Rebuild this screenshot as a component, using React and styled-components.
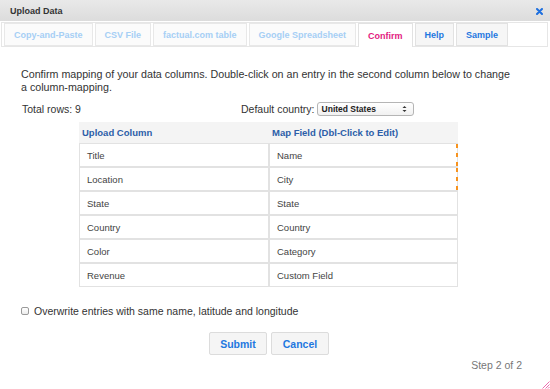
import React from 'react';
import styled, { createGlobalStyle, css } from 'styled-components';

const Global = createGlobalStyle`
  html, body { margin: 0; padding: 0; background: #fff; }
  body { font-family: "Liberation Sans", Arial, Helvetica, sans-serif; color: #333; }
  * { box-sizing: border-box; }
`;

const Dialog = styled.div`
  position: relative;
  width: 550px;
  height: 389px;
  overflow: hidden;
  background: #fff;
  display: flex;
  flex-direction: column;
`;

const TitleBar = styled.div`
  height: 21px;
  display: flex;
  align-items: center;
  justify-content: space-between;
  padding: 0 7px 0 10px;
  background: linear-gradient(#e9e9e9, #dcdcdc);
`;

const Title = styled.div`
  font-size: 9px;
  font-weight: bold;
  color: #333;
`;

const Close = styled.svg`
  width: 7px;
  height: 7px;
  margin-top: 1px;
`;

const TabBar = styled.div`
  margin: 1px 2px 0 1px;
  height: 25px;
  border: 1px solid #e6e6e6;
  padding: 0 2px;
  display: flex;
  align-items: flex-start;
  gap: 2px;
`;

const Tab = styled.div`
  height: 23px;
  padding: 0 9px;
  display: flex;
  align-items: center;
  font-size: 9px;
  font-weight: bold;
  border: 1px solid #e8e8e8;
  background: #fbfbfb;
  color: #a6cff5;
  ${(p) => p.$tone === 'link' && css`
    color: #1f78e0;
    background: #f6f6f6;
    border-color: #e2e2e2;
  `}
  ${(p) => p.$active && css`
    color: #e3197f;
    background: #fff;
    border-color: #e2e2e2;
    border-bottom: none;
    height: 24px;
  `}
`;

const Content = styled.div`
  padding: 21px 21px 0 21px;
  flex: 1;
  display: flex;
  flex-direction: column;
  font-size: 10.5px;
  color: #333;
`;

const Intro = styled.p`
  margin: 0;
  padding-right: 13px;
  font-size: 10.7px;
  line-height: 13px;
`;

const MetaRow = styled.div`
  margin-top: 7px;
  display: grid;
  grid-template-columns: 219px auto;
  align-items: center;
  height: 15px;
`;

const MetaText = styled.span`
  padding-left: ${(p) => p.$indent || 0}px;
`;

const CountryGroup = styled.div`
  display: flex;
  align-items: center;
  gap: 2px;
  padding-left: 1px;
`;

const Select = styled.div`
  width: 97px;
  height: 14px;
  border: 1px solid #b5b5b5;
  border-radius: 3px;
  background: linear-gradient(#ffffff, #f1f1f1);
  display: flex;
  align-items: center;
  justify-content: space-between;
  padding: 0 6px 0 4px;
  font-size: 8.5px;
  font-weight: bold;
  color: #222;
`;

const Arrows = styled.svg`
  width: 5px;
  height: 8px;
`;

const MappingTable = styled.table`
  margin: 6px 0 0 58px;
  width: 379px;
  border-collapse: separate;
  border-spacing: 0;
  font-size: 9.5px;
`;

const HeadCell = styled.th`
  height: 21px;
  background: #f4f4f4;
  text-align: left;
  padding: 0 0 0 ${(p) => p.$pad}px;
  color: #2c5ea8;
  font-weight: bold;
  font-size: 9.5px;
  width: ${(p) => p.$w || 'auto'};
`;

const Cell = styled.td`
  position: relative;
  height: 24px;
  border: 1px solid #e2e2e2;
  padding: 0 0 0 7px;
  color: #444;
  ${(p) => p.$edited && css`
    &::after {
      content: '';
      position: absolute;
      top: 0;
      right: -1px;
      width: 2px;
      height: 100%;
      background: repeating-linear-gradient(#f7931e 0 4px, transparent 4px 9px);
    }
  `}
`;

const CheckRow = styled.label`
  margin-top: 17px;
  display: flex;
  align-items: center;
  gap: 5px;
  height: 14px;
`;

const CheckBox = styled.span`
  width: 8px;
  height: 8px;
  border: 1px solid #9a9a9a;
  border-radius: 2px;
  background: linear-gradient(#fff, #ececec);
`;

const ButtonRow = styled.div`
  margin: 14px 0 0 188px;
  display: flex;
  gap: 4px;
`;

const Button = styled.button`
  height: 23px;
  width: ${(p) => p.$w}px;
  border: 1px solid #dcdcdc;
  border-radius: 2px;
  background: #f5f5f5;
  color: #1f78e0;
  font-family: inherit;
  font-size: 10.5px;
  font-weight: bold;
  padding: 0;
`;

const Step = styled.div`
  margin-top: 4px;
  padding-right: 7px;
  text-align: right;
  color: #777;
  line-height: 13px;
`;

const Grip = styled.svg`
  position: absolute;
  right: 0;
  bottom: 0;
  width: 10px;
  height: 10px;
`;

const tabs = [
  { label: 'Copy-and-Paste' },
  { label: 'CSV File' },
  { label: 'factual.com table' },
  { label: 'Google Spreadsheet' },
  { label: 'Confirm', active: true },
  { label: 'Help', tone: 'link' },
  { label: 'Sample', tone: 'link' },
];

const rows = [
  ['Title', 'Name', true],
  ['Location', 'City', true],
  ['State', 'State'],
  ['Country', 'Country'],
  ['Color', 'Category'],
  ['Revenue', 'Custom Field'],
];

export default function App() {
  return (
    <>
      <Global />
      <Dialog>
        <TitleBar>
          <Title>Upload Data</Title>
          <Close viewBox="0 0 7 7">
            <path d="M1 1 L6 6 M6 1 L1 6" stroke="#1d6fdf" strokeWidth="2" strokeLinecap="round" />
          </Close>
        </TitleBar>
        <TabBar>
          {tabs.map((t) => (
            <Tab key={t.label} $active={t.active} $tone={t.tone}>{t.label}</Tab>
          ))}
        </TabBar>
        <Content>
          <Intro>
            Confirm mapping of your data columns. Double-click on an entry in the second column below to change a column-mapping.
          </Intro>
          <MetaRow>
            <MetaText $indent={1}>Total rows: 9</MetaText>
            <CountryGroup>
              <span>Default country:</span>
              <Select>
                <span>United States</span>
                <Arrows viewBox="0 0 5 8">
                  <path d="M0.5 3 L2.5 1 L4.5 3 Z M0.5 5 L2.5 7 L4.5 5 Z" fill="#333" />
                </Arrows>
              </Select>
            </CountryGroup>
          </MetaRow>
          <MappingTable>
            <thead>
              <tr>
                <HeadCell $pad={3} $w="190px">Upload Column</HeadCell>
                <HeadCell $pad={3}>Map Field (Dbl-Click to Edit)</HeadCell>
              </tr>
            </thead>
            <tbody>
              {rows.map(([a, b, edited]) => (
                <tr key={a}>
                  <Cell>{a}</Cell>
                  <Cell $edited={edited}>{b}</Cell>
                </tr>
              ))}
            </tbody>
          </MappingTable>
          <CheckRow>
            <CheckBox />
            <span>Overwrite entries with same name, latitude and longitude</span>
          </CheckRow>
          <ButtonRow>
            <Button $w={58}>Submit</Button>
            <Button $w={58}>Cancel</Button>
          </ButtonRow>
          <Step>Step 2 of 2</Step>
        </Content>
        <Grip viewBox="0 0 10 10">
          <path d="M9.5 2.5 L2.5 9.5 M9.5 5.5 L5.5 9.5 M9.5 8 L8 9.5" stroke="#e8489a" strokeWidth="0.8" />
        </Grip>
      </Dialog>
    </>
  );
}
